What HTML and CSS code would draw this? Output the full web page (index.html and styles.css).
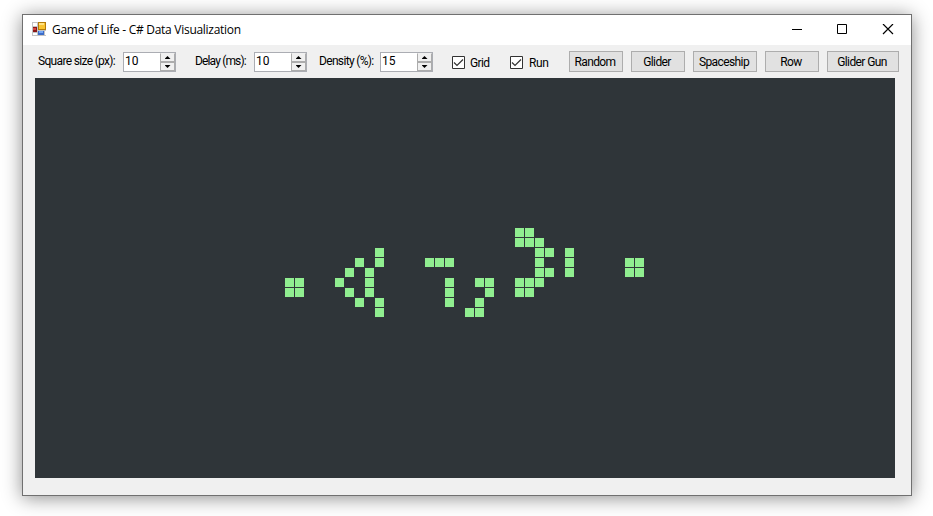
FILE: index.html
```html
<!DOCTYPE html>
<html lang="en">
<head>
<meta charset="utf-8">
<title>Game of Life - C# Data Visualization</title>
<link rel="stylesheet" href="styles.css">
</head>
<body>
<main class="window">
  <header class="titlebar">
    <svg class="app-icon" width="14" height="14" viewBox="0 0 14 14" shape-rendering="crispEdges">
      <path fill="#c3c3c3" d="M0 0h14v14H0z"/>
      <path fill="#fff" d="M1 1h4v3H1zM1 11h4v2H1zM13 9h1v4h-1z"/>
      <path fill="#8c1616" d="M1 5h4v5H1z"/><path fill="#d6443c" d="M1 6h3v2H1z"/>
      <path fill="#b47a08" d="M6 0h8v8H6z"/><path fill="#f9c330" d="M7 1h6v6H7z"/><path fill="#ffe283" d="M7 1h5v2H7z"/>
      <path fill="#3c6cc8" d="M6 9h6v4H6z"/><path fill="#76a8f4" d="M7 9h4v2H7z"/>
    </svg>
    <h1 class="title">Game of Life - C# Data Visualization</h1>
    <svg class="controls" width="102" height="12" viewBox="0 0 102 12" fill="none" stroke="#000">
      <path d="M0 5.5h10"/>
      <path d="M45.500.500h9v9h-9z"/>
      <path d="M91 0l10 10M101 0l-10 10" stroke-width="1.2"/>
    </svg>
  </header>
  <section class="toolbar">
    <span class="label label-size">Square size (px):</span>
    <span class="spinner"><span class="value">10</span><span class="arrows"><i class="up"></i><i class="down"></i></span></span>
    <span class="label label-delay">Delay (ms):</span>
    <span class="spinner"><span class="value">10</span><span class="arrows"><i class="up"></i><i class="down"></i></span></span>
    <span class="label label-density">Density (%):</span>
    <span class="spinner"><span class="value">15</span><span class="arrows"><i class="up"></i><i class="down"></i></span></span>
    <span class="check check-grid"><svg width="13" height="13" viewBox="0 0 13 13"><path class="box" d="M.5.5h12v12H.5z"/><path class="tick" d="M2 6.500l3 3 6-6"/></svg>Grid</span>
    <span class="check check-run"><svg width="13" height="13" viewBox="0 0 13 13"><path class="box" d="M.5.5h12v12H.5z"/><path class="tick" d="M2 6.500l3 3 6-6"/></svg>Run</span>
    <div class="buttons">
      <button class="b-small">Random</button>
      <button class="b-small">Glider</button>
      <button class="b-medium">Spaceship</button>
      <button class="b-small">Row</button>
      <button class="b-large">Glider Gun</button>
    </div>
  </section>
  <svg class="board" width="860" height="400" viewBox="0 0 860 400" shape-rendering="crispEdges">
    <path class="cells" d="
      M250 200h9v9h-9zM260 200h9v9h-9zM250 210h9v9h-9zM260 210h9v9h-9z
      M300 200h9v9h-9zM310 190h9v9h-9zM310 210h9v9h-9zM320 180h9v9h-9zM320 220h9v9h-9z
      M330 190h9v9h-9zM330 200h9v9h-9zM330 210h9v9h-9z
      M340 170h9v9h-9zM340 180h9v9h-9zM340 220h9v9h-9zM340 230h9v9h-9z
      M390 180h9v9h-9zM400 180h9v9h-9zM410 180h9v9h-9z
      M410 200h9v9h-9zM410 210h9v9h-9zM410 220h9v9h-9z
      M440 200h9v9h-9zM450 200h9v9h-9zM450 210h9v9h-9zM440 220h9v9h-9zM430 230h9v9h-9zM440 230h9v9h-9z
      M480 150h9v9h-9zM490 150h9v9h-9zM480 160h9v9h-9zM490 160h9v9h-9zM500 160h9v9h-9z
      M500 170h9v9h-9zM510 170h9v9h-9zM500 180h9v9h-9zM500 190h9v9h-9zM510 190h9v9h-9z
      M480 200h9v9h-9zM490 200h9v9h-9zM500 200h9v9h-9zM480 210h9v9h-9zM490 210h9v9h-9z
      M530 170h9v9h-9zM530 180h9v9h-9zM530 190h9v9h-9z
      M590 180h9v9h-9zM600 180h9v9h-9zM590 190h9v9h-9zM600 190h9v9h-9z"/>
  </svg>
</main>
</body>
</html>
```
FILE: styles.css
```css
* { box-sizing: border-box; }
body { margin: 0; padding: 14px 21px 20px 22px; height: 516px; overflow: hidden; background: #fff; }
.window {
  width: 890px; height: 482px; border: 1px solid #707070; background: #f0f0f0;
  box-shadow: 0 2px 18px rgba(0, 0, 0, .45);
  font: 12px/14px Roboto, "Liberation Sans", sans-serif; color: #000;
}
.titlebar { display: flex; align-items: flex-start; height: 30px; padding: 7px 17px 0 9px; background: #fff; }
.title { margin: 0 0 0 6px; font: 12px/16px "Open Sans", "Noto Sans", sans-serif; letter-spacing: -.28px; white-space: nowrap; }
.controls { margin: 2px 0 0 auto; }
.toolbar { display: flex; align-items: flex-start; height: 33px; padding: 6px 12px 0 15px; white-space: nowrap; }
.label { margin-top: 3px; letter-spacing: -.67px; }
.label-size { width: 85px; }
.label-delay { width: 59px; margin-left: 19px; letter-spacing: -.85px; }
.label-density { width: 61px; margin-left: 12px; }
.spinner { display: flex; justify-content: space-between; width: 53px; height: 20px; margin-top: 1px; border: 1px solid #abadb3; background: #fff; }
.value { padding: 1px 0 0 1px; line-height: 15px; }
.arrows { display: grid; grid-template-rows: 9px 9px; width: 15px; background: #f0f0f0; }
.up, .down { display: grid; place-items: center; border: 1px solid #acacac; background: #f0f0f0; }
.up { border-top-color: #f0f0f0; }
.up::before, .down::before { content: ""; width: 6px; height: 3px; background: #000; clip-path: polygon(50% 0, 100% 100%, 0 100%); }
.down::before { clip-path: polygon(0 0, 100% 0, 50% 100%); }
.check { display: flex; gap: 5px; margin-top: 5px; letter-spacing: -.6px; }
.check svg { flex: none; }
.check-grid { width: 58px; margin-left: 19px; }
.check-run { width: 59px; gap: 6px; letter-spacing: -.4px; }
.box { fill: #fff; stroke: #333; }
.tick { fill: none; stroke: #333; stroke-width: 1.2; }
.buttons { display: flex; gap: 8px; }
button { height: 21px; padding: 0 2px 0 0; border: 1px solid #adadad; background: #e1e1e1; color: #000; font: inherit; letter-spacing: -.6px; }
.b-small { width: 54px; }
.b-medium { width: 64px; }
.b-large { width: 72px; }
.board { display: block; margin-left: 12px; background: #2f3539; }
.cells { fill: #90ee90; }
```
